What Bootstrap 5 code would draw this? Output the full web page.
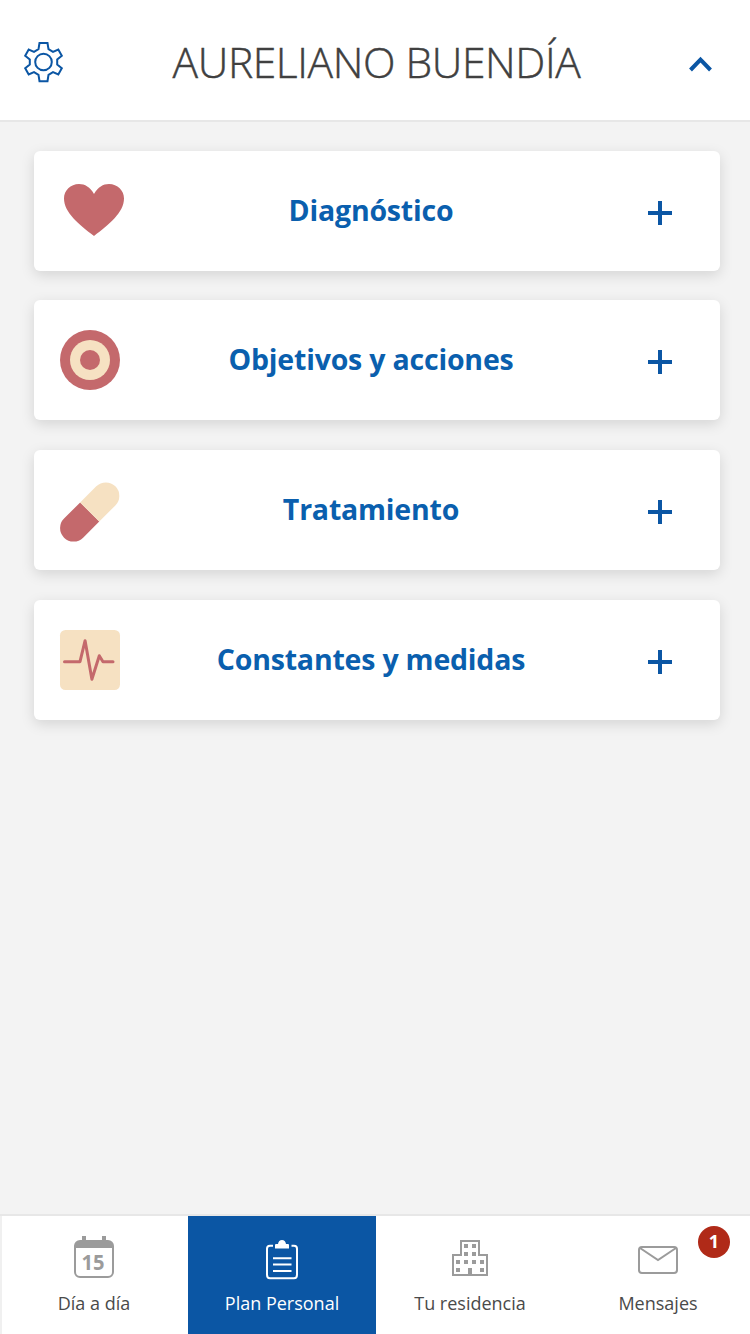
<!DOCTYPE html>
<html lang="es">
<head>
<meta charset="utf-8">
<meta name="viewport" content="width=device-width, initial-scale=1">
<title>Plan Personal</title>
<link href="https://cdn.jsdelivr.net/npm/bootstrap@5.3.0/dist/css/bootstrap.min.css" rel="stylesheet">
<style>
  body { background: #f3f3f3; font-family: "Open Sans", "Noto Sans", sans-serif; color: #444; }
  svg { display: block; flex: none; overflow: visible; }
  .topbar { height: 122px; border-bottom: 2px solid #e7e7e7; padding: 0 38px 0 23px; }
  .topbar .gear { margin-top: 3px; }
  .topbar .chevron { margin-top: 8px; }
  .person { font-size: 42.5px; font-weight: 300; line-height: 60px; color: #404040; white-space: nowrap; letter-spacing: -.4px; margin: 3px 0 0; -webkit-text-stroke: .45px #404040; }
  .sections { padding: 29px 30px 0 34px; gap: 30px; }
  .section-card { height: 120px; border: 0; border-radius: 6px; box-shadow: 0 4px 14px rgba(0,0,0,.13); padding: 0 48px 0 26px; }
  .section-card:first-child { margin-bottom: -1px; }
  .section-card h2 { font-size: 28.5px; font-weight: 700; line-height: 40px; letter-spacing: -.2px; color: #0a5fae; margin: 0 0 2px; padding-right: 26px; white-space: nowrap; }
  .section-card .plus { margin-top: 4px; }
  .tabs { height: 120px; border-top: 2px solid #e7e7e7; }
  .tab { width: 188px; flex: none; color: #4a4a4a; text-decoration: none; font-size: 18px; line-height: 24px; padding-top: 20px; gap: 13px; white-space: nowrap; }
  .tab:first-child { box-shadow: inset 2px 0 #f0f0f0; }
  .tab.active { background: #0b56a4; color: #fff; }
  .tab .count { position: absolute; top: 10px; right: 22px; width: 32px; height: 32px; border-radius: 50%; background: #b02a18; color: #fff; font-size: 18px; font-weight: 700; line-height: 31px; text-align: center; }
</style>
</head>
<body class="d-flex flex-column vh-100 overflow-hidden">
<header class="topbar bg-white d-flex align-items-center justify-content-between">
  <svg class="gear" width="41" height="42" viewBox="0 0 41 42" fill="none" stroke="#0b56a4" stroke-width="2">
    <path d="M16.500 2h8l1 6.200 4.500 2.600 5.300-2.200 3.500 6.200-4.600 3.700v5l4.600 3.700-3.500 6.200-5.300-2.200-4.500 2.600-1 6.400h-8l-1-6.400-4.500-2.600-5.300 2.200-3.500-6.200 4.600-3.700v-5l-4.600-3.700 3.500-6.200 5.300 2.200 4.500-2.600z"/>
    <circle cx="20.500" cy="21" r="8.300"/>
  </svg>
  <h1 class="person">AURELIANO BUENDÍA</h1>
  <svg class="chevron" width="23" height="16" viewBox="0 0 23 16" fill="none" stroke="#0b56a4" stroke-width="4"><path d="M1.500 14 11.500 3.700l10 10.300"/></svg>
</header>

<main class="sections flex-grow-1 d-flex flex-column">
  <section class="section-card card flex-row align-items-center">
    <svg width="60" height="60" viewBox="0 0 60 60"><path fill="#c4696c" d="M34 13C30 6 25 3 19 3 10.500 3 4 9.500 4 17.500c0 14 15 26 30 37.500 15-11.500 30-23.500 30-37.500C64 9.500 57.500 3 49 3 43 3 38 6 34 13z"/></svg>
    <h2 class="flex-grow-1 text-center">Diagnóstico</h2>
    <svg class="plus" width="24" height="24" viewBox="0 0 24 24" fill="#0b56a4"><path d="M10 0h4v10h10v4H14v10h-4V14H0v-4h10z"/></svg>
  </section>
  <section class="section-card card flex-row align-items-center">
    <svg width="60" height="60" viewBox="0 0 60 60"><circle cx="30" cy="30" r="30" fill="#c4696c"/><circle cx="30" cy="30" r="20" fill="#f6e1c2"/><circle cx="30" cy="30" r="10" fill="#c4696c"/></svg>
    <h2 class="flex-grow-1 text-center">Objetivos y acciones</h2>
    <svg class="plus" width="24" height="24" viewBox="0 0 24 24" fill="#0b56a4"><path d="M10 0h4v10h10v4H14v10h-4V14H0v-4h10z"/></svg>
  </section>
  <section class="section-card card flex-row align-items-center">
    <svg width="60" height="60" viewBox="0 0 60 60"><g transform="translate(29.700 32) rotate(-45)"><path fill="#c4696c" d="M0-13.500h-22.800a13.500 13.500 0 0 0 0 27H0z"/><path fill="#f6e1c2" d="M0-13.500h22.800a13.500 13.500 0 0 1 0 27H0z"/></g></svg>
    <h2 class="flex-grow-1 text-center">Tratamiento</h2>
    <svg class="plus" width="24" height="24" viewBox="0 0 24 24" fill="#0b56a4"><path d="M10 0h4v10h10v4H14v10h-4V14H0v-4h10z"/></svg>
  </section>
  <section class="section-card card flex-row align-items-center">
    <svg width="60" height="60" viewBox="0 0 60 60"><rect width="60" height="60" rx="5.500" fill="#f6e1c2"/><path d="M4.500 31.700h15.500L25.100 10.700 31.900 49.200 39.300 25.800 43 31.700h10" fill="none" stroke="#c4696c" stroke-width="3" stroke-linecap="round" stroke-linejoin="round"/></svg>
    <h2 class="flex-grow-1 text-center">Constantes y medidas</h2>
    <svg class="plus" width="24" height="24" viewBox="0 0 24 24" fill="#0b56a4"><path d="M10 0h4v10h10v4H14v10h-4V14H0v-4h10z"/></svg>
  </section>
</main>

<nav class="tabs bg-white d-flex">
  <a href="#" class="tab d-flex flex-column align-items-center">
    <svg width="40" height="42" viewBox="0 0 40 42"><path d="M8 0h4v4h16V0h4v4h2a6 6 0 0 1 6 6v26a6 6 0 0 1-6 6H6a6 6 0 0 1-6-6V10a6 6 0 0 1 6-6h2zM2 12v24a4 4 0 0 0 4 4h28a4 4 0 0 0 4-4V12z" fill="#9b9b9b" fill-rule="evenodd"/><text x="19" y="34" text-anchor="middle" font-size="21" font-weight="700" textLength="23" lengthAdjust="spacingAndGlyphs" fill="#9b9b9b">15</text></svg>
    <span>Día a día</span>
  </a>
  <a href="#" class="tab active d-flex flex-column align-items-center">
    <svg width="34" height="42" viewBox="0 0 34 42"><path d="M8 9.700H5q-3 0-3 3v26q0 3.500 3 3.500h24q3 0 3-3.500v-26q0-3-3-3h-2.500M8 22.300h18.500M8 28.600h18.500M8 35h18.500" fill="none" stroke="#fff" stroke-width="2"/><path d="M10 12.500V9q0-1 1-1h2q.7-4 4-4t4 4h2q1 0 1 1v3.500z" fill="#fff"/></svg>
    <span>Plan Personal</span>
  </a>
  <a href="#" class="tab d-flex flex-column align-items-center">
    <svg width="36" height="42" viewBox="0 0 36 42"><path d="M1 19h8V5h18v14h8v20H1z" fill="none" stroke="#9b9b9b" stroke-width="2"/><path d="M12 8h4v4h-4zm8 0h4v4h-4zm-8 8h4v4h-4zm8 0h4v4h-4zM4 24h4v4H4zm8 0h4v4h-4zm8 0h4v4h-4zm8 0h4v4h-4zM4 32h4v4H4zm24 0h4v4h-4zm-12 0h4v7h-4z" fill="#9b9b9b"/></svg>
    <span>Tu residencia</span>
  </a>
  <a href="#" class="tab position-relative d-flex flex-column align-items-center">
    <svg width="40" height="42" viewBox="0 0 40 42" fill="none" stroke="#9b9b9b" stroke-width="2"><rect x="1" y="11" width="38" height="26" rx="3"/><path d="M2 12l18 12 18-12"/></svg>
    <span>Mensajes</span>
    <span class="count">1</span>
  </a>
</nav>
<script src="https://cdn.jsdelivr.net/npm/bootstrap@5.3.0/dist/js/bootstrap.bundle.min.js"></script>
</body>
</html>
